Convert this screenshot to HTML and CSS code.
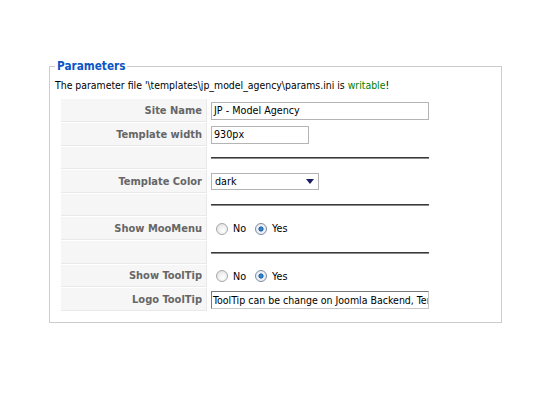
FILE: index.html
```html
<!DOCTYPE html>
<html>
<head>
<meta charset="utf-8">
<link rel="stylesheet" href="styles.css">
</head>
<body>
<fieldset class="params">
  <legend class="params-title">Parameters</legend>
  <div class="params-note">The parameter file '\templates\jp_model_agency\params.ini is <span class="ok">writable</span>!</div>
  <table class="paramlist">
    <tr class="row-input">
      <td class="key">Site Name</td>
      <td class="value"><div class="textbox wide">JP - Model Agency</div></td>
    </tr>
    <tr class="row-input">
      <td class="key">Template width</td>
      <td class="value"><div class="textbox narrow">930px</div></td>
    </tr>
    <tr class="row-spacer">
      <td class="key"></td>
      <td class="value"><div class="rule"></div></td>
    </tr>
    <tr class="row-input">
      <td class="key">Template Color</td>
      <td class="value">
        <div class="selectbox"><span class="select-text">dark</span>
          <svg class="select-arrow" width="8" height="5" viewBox="0 0 8 5"><polygon points="0,0 8,0 4,5" fill="#1c1c66"/></svg>
        </div>
      </td>
    </tr>
    <tr class="row-spacer">
      <td class="key"></td>
      <td class="value"><div class="rule"></div></td>
    </tr>
    <tr class="row-input">
      <td class="key">Show MooMenu</td>
      <td class="value">
        <div class="radios">
          <span class="radio"></span><span class="radio-label">No</span>
          <span class="radio checked"></span><span class="radio-label">Yes</span>
        </div>
      </td>
    </tr>
    <tr class="row-spacer tall">
      <td class="key"></td>
      <td class="value"><div class="rule"></div></td>
    </tr>
    <tr class="row-spacer">
      <td class="key">Show ToolTip</td>
      <td class="value">
        <div class="radios">
          <span class="radio"></span><span class="radio-label">No</span>
          <span class="radio checked"></span><span class="radio-label">Yes</span>
        </div>
      </td>
    </tr>
    <tr class="row-input">
      <td class="key">Logo ToolTip</td>
      <td class="value"><div class="textbox wide dark">ToolTip can be change on Joomla Backend, Template Parameters</div></td>
    </tr>
  </table>
</fieldset>
</body>
</html>
```

FILE: styles.css
```css
html, body {
  margin: 0;
  padding: 0;
  background: #fff;
}
body {
  font-family: "DejaVu Sans Condensed", "Liberation Sans", sans-serif;
  font-size: 11px;
  color: #000;
}
.params {
  margin: 58px 0 0 49px;
  width: 453px;
  box-sizing: border-box;
  border: 1px solid #cccccc;
  padding: 0 5px 10px 5px;
}
.params-title {
  color: #0b55c4;
  font-weight: bold;
  font-size: 11.7px;
  line-height: 16px;
  padding: 0 2px;
}
.params-note {
  font-size: 10.4px;
  line-height: 14px;
  margin: 4px 0 6px 0;
}
.ok {
  color: #008000;
}
.paramlist {
  border-collapse: separate;
  border-spacing: 1px;
  margin-left: 5px;
}
.paramlist td {
  padding: 0;
}
.key {
  width: 141px;
  background: #f6f6f6;
  border-bottom: 1px solid #e9e9e9;
  border-right: 1px solid #e9e9e9;
  text-align: right;
  color: #666;
  font-weight: bold;
  padding: 0 4px 0 0 !important;
  vertical-align: middle;
}
.value {
  padding-left: 3px !important;
  vertical-align: middle;
}
.row-input .key { height: 22px; }
.row-spacer .key { height: 21px; }
.row-spacer.tall .key { height: 22px; }
.textbox {
  box-sizing: border-box;
  height: 18px;
  border: 1px solid #b4b4b4;
  background: #fff;
  line-height: 16px;
  padding-left: 2px;
  white-space: nowrap;
  overflow: hidden;
  font-size: 10.7px;
}
.textbox.wide { width: 218px; }
.textbox.narrow { width: 98px; }
.textbox.dark {
  border-color: #c8c8c8;
  border-top-color: #7a7a7a;
  border-left-color: #7a7a7a;
  padding-left: 1px;
  font-size: 10.5px;
}
.rule {
  width: 218px;
  height: 0;
  border-top: 1px solid #3a3a3a;
  border-bottom: 1px solid #8a8a8a;
}
.selectbox {
  box-sizing: border-box;
  width: 108px;
  height: 17px;
  border: 1px solid #b4b4b4;
  display: flex;
  align-items: center;
  justify-content: space-between;
  padding: 0 4px 0 3px;
  font-size: 10.7px;
}
.select-text {
  line-height: 15px;
}
.radios {
  display: flex;
  align-items: center;
  height: 20px;
  padding-left: 5px;
  font-size: 10.7px;
}
.radio {
  box-sizing: border-box;
  width: 12px;
  height: 12px;
  border-radius: 50%;
  border: 1px solid #a8a8a8;
  background: radial-gradient(circle at 60% 65%, #ffffff 0%, #ededed 55%, #d6d6d6 100%);
  margin-right: 5px;
  position: relative;
}
.radio.checked {
  border-color: #7a8ba0;
  background: radial-gradient(circle at 50% 50%, #3a9be0 0%, #1b5fae 32%, #e8ecf1 40%, #f6f6f6 100%);
}
.radio-label {
  margin-right: 9px;
}
```
